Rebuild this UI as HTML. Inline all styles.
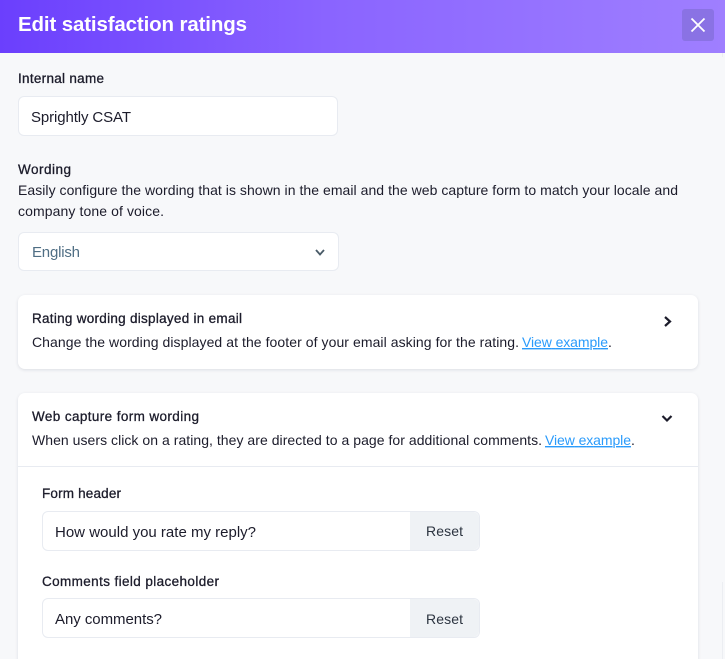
<!DOCTYPE html>
<html>
<head>
<meta charset="utf-8">
<style>
html,body{margin:0;padding:0;width:725px;height:659px;overflow:hidden;background:#f7f8fa;font-family:"Liberation Sans",sans-serif}
#w{position:relative;width:725px;height:659px;overflow:hidden;background:#f7f8fa}
.a{position:absolute;box-sizing:border-box}
.hd{left:0;top:0;width:725px;height:53px;background:linear-gradient(90deg,#6b3ffd 0%,#8a64ff 45%,#9f7fff 100%)}
.close{left:682px;top:9px;width:32px;height:32px;border-radius:3px;background:#8a72e4}
.box{background:#fff;border:1px solid #e8ebf1;border-radius:6px}
.card{left:18px;width:680px;background:#fff;border-radius:7px;box-shadow:0 1px 3px rgba(40,50,80,.13)}
.reset{background:#eff2f5;border-radius:0 6px 6px 0}
svg.t{position:absolute;left:0;top:0}
svg.t text{font-family:"Liberation Sans",sans-serif;font-size:14px;fill:#1c1c2b}
svg.t text.m{font-size:13.5px;stroke:#1c1c2b;stroke-width:.3px}
svg.t text.v{font-size:15px}
svg.t .l{fill:#2a9bfb;text-decoration:underline}
</style>
</head>
<body>
<div id="w">
<div class="a" style="left:722px;top:53px;width:1px;height:4px;background:#eceef2"></div>
<div class="a" style="left:722px;top:582px;width:1px;height:77px;background:#eceef2"></div>
<div class="a hd"></div>
<div class="a close"></div>

<div class="a box" style="left:18px;top:96px;width:320px;height:40px"></div>
<div class="a box" style="left:18px;top:232px;width:321px;height:39px"></div>

<div class="a card" style="top:295px;height:74px"></div>
<div class="a card" style="top:393px;height:290px"></div>
<div class="a" style="left:18px;top:466px;width:680px;height:1px;background:#e8ebf1"></div>

<div class="a box" style="left:42px;top:511px;width:438px;height:40px"></div>
<div class="a reset" style="left:410px;top:512px;width:69px;height:38px"></div>
<div class="a box" style="left:42px;top:598px;width:438px;height:40px"></div>
<div class="a reset" style="left:410px;top:599px;width:69px;height:38px"></div>

<svg class="t" width="725" height="659" viewBox="0 0 725 659">
<path d="M691.500 18.500L704.500 31.500M704.500 18.500L691.500 31.500" stroke="#fff" stroke-width="1.800" fill="none"/>
<path d="M316 250L320 254.500L324 250" stroke="#4a5b68" stroke-width="1.800" fill="none"/>
<path d="M665 317L670 321.500L665 326" stroke="#1c1c2b" stroke-width="2.200" fill="none"/>
<path d="M662.500 416L667 420.500L671.500 416" stroke="#1c1c2b" stroke-width="2.200" fill="none"/>

<text x="18" y="31" textLength="229" lengthAdjust="spacing" style="font-size:20.500px;font-weight:bold;fill:#fff">Edit satisfaction ratings</text>
<text class="m" x="18" y="83" textLength="86" lengthAdjust="spacing">Internal name</text>
<text class="v" x="31" y="122" textLength="100" lengthAdjust="spacing">Sprightly CSAT</text>
<text class="m" x="18" y="174" textLength="53" lengthAdjust="spacing">Wording</text>
<text x="18" y="195" textLength="660" lengthAdjust="spacing">Easily configure the wording that is shown in the email and the web capture form to match your locale and</text>
<text x="18" y="216" textLength="146" lengthAdjust="spacing">company tone of voice.</text>
<text class="v" x="32" y="257" textLength="48" lengthAdjust="spacing" style="fill:#4f6e84">English</text>

<text class="m" x="32" y="323" textLength="210" lengthAdjust="spacing">Rating wording displayed in email</text>
<text x="32" y="347" textLength="487" lengthAdjust="spacing">Change the wording displayed at the footer of your email asking for the rating.</text>
<text class="l" x="522" y="347" textLength="86" lengthAdjust="spacing">View example</text>
<text x="608" y="347">.</text>

<text class="m" x="32" y="421" textLength="167" lengthAdjust="spacing">Web capture form wording</text>
<text x="32" y="445" textLength="510" lengthAdjust="spacing">When users click on a rating, they are directed to a page for additional comments.</text>
<text class="l" x="545" y="445" textLength="86" lengthAdjust="spacing">View example</text>
<text x="631" y="445">.</text>

<text class="m" x="42" y="498" textLength="79" lengthAdjust="spacing">Form header</text>
<text class="v" x="55" y="537" textLength="201" lengthAdjust="spacing">How would you rate my reply?</text>
<text x="426" y="536" textLength="37" lengthAdjust="spacing" style="fill:#2c3440">Reset</text>
<text class="m" x="42" y="586" textLength="177" lengthAdjust="spacing">Comments field placeholder</text>
<text class="v" x="55" y="624" textLength="107" lengthAdjust="spacing">Any comments?</text>
<text x="426" y="624" textLength="37" lengthAdjust="spacing" style="fill:#2c3440">Reset</text>
</svg>
</div>
</body>
</html>
